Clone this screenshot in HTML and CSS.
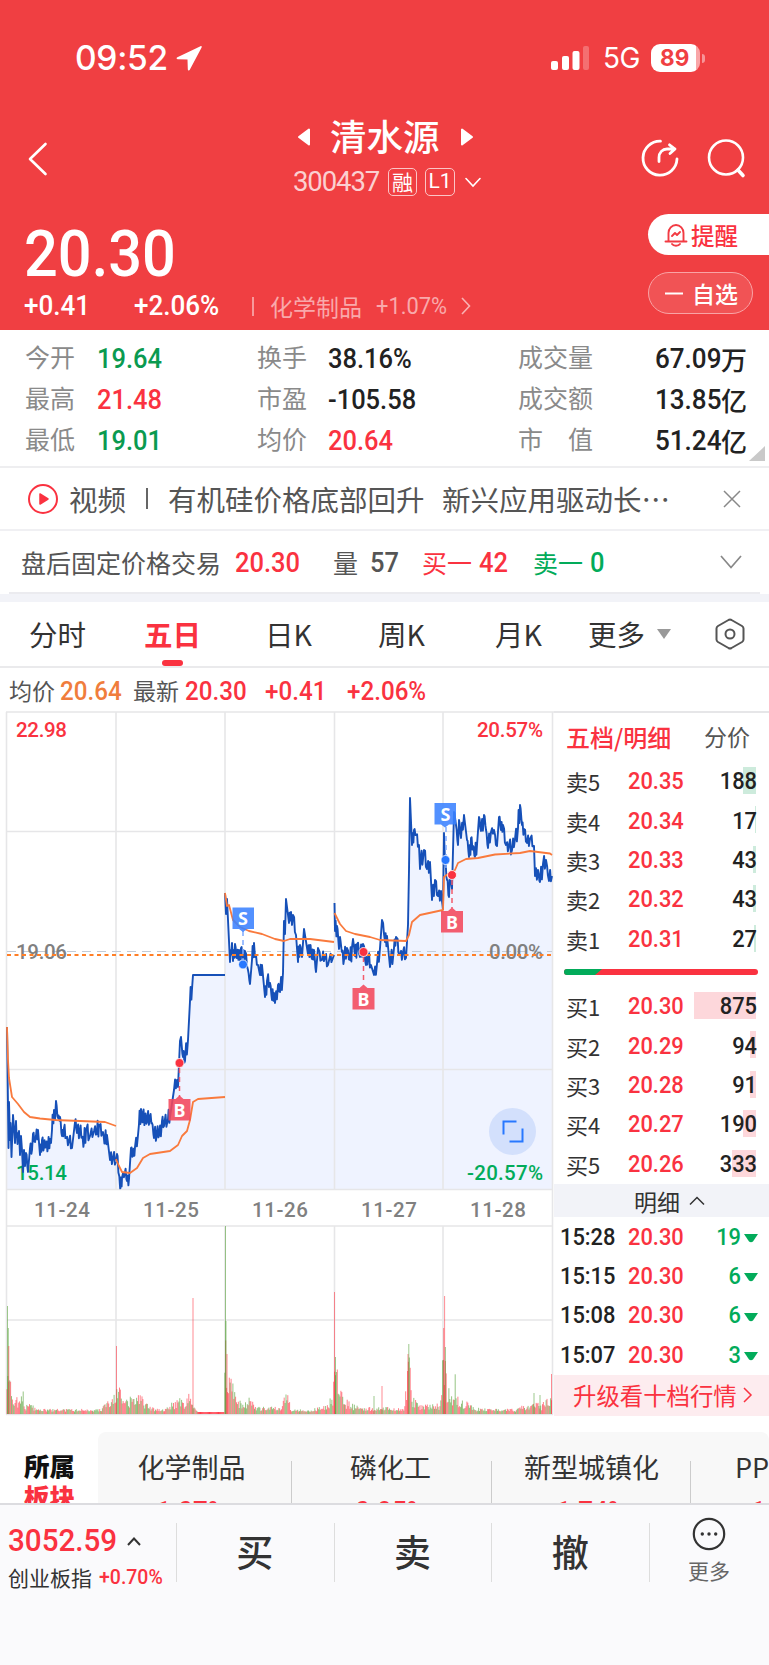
FILE: index.html
```html
<!DOCTYPE html>
<html lang="zh-CN">
<head>
<meta charset="utf-8">
<title>清水源 300437</title>
<link rel="stylesheet" href="styles.css">
</head>
<body>
<header class="hero">
  <div class="status">
    <span class="clock">09:52</span>
    <svg class="loc" width="27" height="27" viewBox="0 0 27 27"><path d="M24.5 1.2 1.4 12.2c-1.3.7-1 2 .5 2.1l9.6.3.3 9.7c.1 1.4 1.4 1.7 2 .5L25.6 2.4c.4-.9-.2-1.6-1.1-1.2z" fill="#fff"/></svg>
    <svg class="signal" width="40" height="25" viewBox="0 0 40 25" fill="#fff"><rect x="0" y="15" width="7" height="9" rx="2"/><rect x="11" y="10" width="7" height="14" rx="2"/><rect x="21.500" y="5" width="7" height="19" rx="2"/><rect x="32" y="0" width="6" height="24" rx="2" opacity=".25"/></svg>
    <span class="net">5G</span>
    <span class="battery"><b>89</b></span><i class="nub"></i>
  </div>
  <div class="titlebar">
    <svg class="back" width="20" height="34" viewBox="0 0 20 34" fill="none" stroke="#fff" stroke-width="2.600" stroke-linecap="round" stroke-linejoin="round"><path d="M17.500 2 2 17l15.500 15"/></svg>
    <div class="title">
      <div class="name"><svg width="14" height="18" viewBox="0 0 14 18"><path d="M12 1.500v15L2 9z" fill="#fff" stroke="#fff" stroke-width="2" stroke-linejoin="round"/></svg><span>清水源</span><svg width="14" height="18" viewBox="0 0 14 18"><path d="M2 1.500v15L12 9z" fill="#fff" stroke="#fff" stroke-width="2" stroke-linejoin="round"/></svg></div>
      <div class="code"><span class="codenum">300437</span><span class="tag">融</span><span class="tag l1">L1</span><svg width="16" height="11" viewBox="0 0 16 11" fill="none" stroke="#fff" stroke-width="1.600" stroke-linecap="round"><path d="m1 1.500 7 7.500 7-7.500"/></svg></div>
    </div>
    <svg class="share" width="40" height="40" viewBox="0 0 40 40" fill="none" stroke="#fff" stroke-width="2.800" stroke-linecap="round" stroke-linejoin="round"><path d="M20.500 2.200A17 17 0 1 0 37 20"/><path d="M19 22.500v-4c0-5 3.500-8.500 8-8.500h8M29.500 5.800l5.500 4.200-5 4.500"/></svg>
    <svg class="search" width="40" height="40" viewBox="0 0 40 40" fill="none" stroke="#fff" stroke-width="2.600" stroke-linecap="round"><circle cx="19" cy="18.500" r="17"/><path d="m31 31 5 5.500" stroke-width="3.600"/></svg>
  </div>
  <div class="quote">
    <div class="quote-main">
      <div class="price"><span class="n">20.30</span></div>
      <div class="change"><span class="n">+0.41</span><span class="n">+2.06%</span><i></i><span class="dim">化学制品</span><span class="n dim d2">+1.07%</span><svg width="12" height="18" viewBox="0 0 12 18" fill="none" stroke="#fff" stroke-opacity=".6" stroke-width="1.600"><path d="m2 1 7.500 8L2 17"/></svg></div>
    </div>
    <div class="actions">
      <div class="remind"><svg width="24" height="24" viewBox="0 0 24 24" fill="none" stroke="#f23b43" stroke-width="1.900" stroke-linejoin="round" stroke-linecap="round"><path d="M4.500 18V10a7.500 8 0 0 1 15 0v8M1.500 18.500h21M8 21c1.500 2.300 6.500 2.300 8 0M8 13l3-3 2 2 3-3"/></svg><span>提醒</span></div>
      <div class="fav"><svg width="18" height="3"><path d="M0 1.500h18" stroke="#fff" stroke-width="2"/></svg><span>自选</span></div>
    </div>
  </div>
</header>

<section class="stats">
  <span>今开</span><b class="n g">19.64</b><span>换手</span><b class="n">38.16%</b><span>成交量</span><b class="r-al"><em class="n">67.09</em>万</b>
  <span>最高</span><b class="n r">21.48</b><span>市盈</span><b class="n">-105.58</b><span>成交额</span><b class="r-al"><em class="n">13.85</em>亿</b>
  <span>最低</span><b class="n g">19.01</b><span>均价</span><b class="n r">20.64</b><span class="wide">市<i></i>值</span><b class="r-al"><em class="n">51.24</em>亿</b>
  <svg class="corner" width="16" height="16"><path d="M16 0v15H0z" fill="#c9c9c9"/></svg>
</section>

<section class="video">
  <svg width="32" height="32" viewBox="0 0 32 32"><circle cx="16" cy="16" r="14" fill="none" stroke="#fa3240" stroke-width="2"/><path d="M13 11v10l8-5z" fill="#fa3240" stroke="#fa3240" stroke-width="1.500" stroke-linejoin="round"/></svg>
  <span>视频</span><i></i><span>有机硅价格底部回升</span><span>新兴应用驱动长…</span>
  <svg class="close" width="18" height="18" viewBox="0 0 18 18" stroke="#888" stroke-width="1.500"><path d="m1 1 16 16M17 1 1 17"/></svg>
</section>

<section class="after">
  <span>盘后固定价格交易</span><b class="n r">20.30</b><span>量</span><b class="n">57</b><span class="r">买一</span><b class="n r">42</b><span class="g2">卖一</span><b class="n g2">0</b>
  <svg width="22" height="14" viewBox="0 0 22 14" fill="none" stroke="#888" stroke-width="1.700"><path d="m1 1 10 11.500L21 1"/></svg>
</section>
<div class="band"></div>

<nav class="tabs">
  <span>分时</span><span class="on">五日</span><span>日K</span><span>周K</span><span>月K</span><span>更多</span>
  <svg width="14" height="10"><path d="M0 0h14L7 10z" fill="#999"/></svg>
  <svg width="30" height="32" viewBox="0 0 30 32" fill="none" stroke="#555" stroke-width="2" stroke-linejoin="round"><path d="M13.500 2q1.500-.8 3 0l10.500 6q1.500 1 1.500 2.500v11q0 1.500-1.500 2.500l-10.500 6q-1.500.8-3 0L3 24q-1.500-1-1.500-2.500v-11Q1.500 9 3 8z"/><circle cx="15" cy="16" r="4.500"/></svg>
</nav>

<div class="info"><span>均价</span><b class="n o">20.64</b><span>最新</span><b class="n r">20.30</b><b class="n r">+0.41</b><b class="n r">+2.06%</b></div>

<main class="market">
  <svg class="chart" width="554" height="705" viewBox="0 711 554 705">
    <path id="fill" fill="#eff3ff"/>
    <g stroke="#e6e6e8" stroke-width="1.600" fill="none">
      <path d="M6 712H554M6 831.500H553M6 1069.500H553M6 1189.500H553M6 1226H553M6 1320H553M6 1414.500H553"/>
      <path d="M6.500 712V1414.500M116 712V1189.500M225 712V1189.500M334.500 712V1189.500M443 712V1189.500M552.500 712V1414.500M116 1226V1414M225 1226V1414M334.500 1226V1414M443 1226V1414"/>
    </g>
    <path d="M7 951.500H552" stroke="#c3cbd6" stroke-width="1.200" stroke-dasharray="9 6"/>
    <g class="axis">
      <text x="16" y="737" class="r" textLength="51">22.98</text>
      <text x="16" y="959" textLength="51">19.06</text>
      <text x="16" y="1180" class="g2" textLength="51">15.14</text>
      <text x="477" y="737" class="r" textLength="66">20.57%</text>
      <text x="489" y="959" textLength="54">0.00%</text>
      <text x="467" y="1180" class="g2" textLength="76">-20.57%</text>
      <text x="34" y="1217" textLength="56">11-24</text><text x="143" y="1217" textLength="56">11-25</text><text x="252" y="1217" textLength="56">11-26</text><text x="361" y="1217" textLength="56">11-27</text><text x="470" y="1217" textLength="56">11-28</text>
    </g>
    <path id="line" fill="none" stroke="#1650b8" stroke-width="1.900" stroke-linejoin="round"/>
    <path d="M7 955H552" stroke="#ff7f27" stroke-width="1.800" stroke-dasharray="4 3.500"/>
    <g fill="none" stroke="#f97a3d" stroke-width="1.800" stroke-linejoin="round">
      <path d="M7 1027 8 1060 9 1078 12 1097 18 1104 24 1112 30 1117 40 1118.500 55 1120 80 1121 105 1122 116 1126"/>
      <path d="M116 1159 119 1166 122 1172 130 1173 137 1168 143 1158 150 1154 170 1151 178 1145 182 1136 187 1131 190 1120 193 1102 198 1099 225 1097"/>
      <path d="M225 893 227 906 229 905 233 920 240 927 249 931 262 934 275 939 284 941 290 939 310 939 334 942"/>
      <path d="M334.500 913 340 924 346 931 355 934 370 937 380 940 406 941 409 935 412 922 420 915 443 910 444 877 448 874 455 870 458 863 466 859 478 858 495 854.500 520 853 530 851 550 853.500 552 855"/>
    </g>
    <g stroke-width="1.500" stroke-dasharray="5 4"><path d="M243 931V960M446 827V868" stroke="#7eaaff"/><path d="M179.500 1068V1097M363.500 957V984M452 880V908" stroke="#f25c6c"/></g>
    <g stroke="#fff" stroke-width=".8"><g fill="#2878ff"><circle cx="243" cy="964.500" r="4.500"/><circle cx="445.500" cy="860" r="4.500"/></g><g fill="#fa3240"><circle cx="179.500" cy="1063" r="4.500"/><circle cx="363.500" cy="952" r="4.500"/><circle cx="452" cy="875" r="4.500"/></g></g>
    <g fill="#3b82ff" fill-opacity=".88"><path d="M232.500 907.500h21.500v21.500h-7l-4 3-4-3h-6.500z"/><path d="M434.500 803h21.500v21.500h-7l-4 3-4-3h-6.500z"/></g>
    <g fill="#f4485c" fill-opacity=".88"><path d="M168.500 1099h7l4-3.500 4 3.500h7v21.500h-22z"/><path d="M352.500 988h7l4-3.500 4 3.500h7v21.500h-22z"/><path d="M441 911h7l4-3.500 4 3.500h7v21.500h-22z"/></g>
    <g class="mark"><text x="243" y="925">S</text><text x="445.500" y="820.500">S</text><text x="179.500" y="1117">B</text><text x="363.500" y="1006">B</text><text x="452" y="929">B</text></g>
    <circle cx="512.500" cy="1131.500" r="23.500" fill="#d3e0fc"/>
    <path d="M503.500 1134.500v-13h13M522.500 1128.500v13h-13" fill="none" stroke="#2878ff" stroke-width="2"/>
    <g id="volume" stroke-width="1"></g>
  </svg>
  <aside class="book">
    <div class="bhead"><b>五档/明细</b><span>分价</span></div>
    <div class="row sell"><span>卖5</span><b class="n">20.35</b><i style="width:13px"></i><em class="n">188</em></div>
    <div class="row sell"><span>卖4</span><b class="n">20.34</b><i style="width:1px"></i><em class="n">17</em></div>
    <div class="row sell"><span>卖3</span><b class="n">20.33</b><i style="width:3px"></i><em class="n">43</em></div>
    <div class="row sell"><span>卖2</span><b class="n">20.32</b><i style="width:3px"></i><em class="n">43</em></div>
    <div class="row sell"><span>卖1</span><b class="n">20.31</b><i style="width:2px"></i><em class="n">27</em></div>
    <div class="ratio"><svg width="194" height="6"><rect width="194" height="6" rx="3" fill="#fa3240"/><path d="M3 0H38L31 6H3A3 3 0 0 1 3 0" fill="#02ab5a"/></svg></div>
    <div class="row buy"><span>买1</span><b class="n">20.30</b><i style="width:62px"></i><em class="n">875</em></div>
    <div class="row buy"><span>买2</span><b class="n">20.29</b><i style="width:6px"></i><em class="n">94</em></div>
    <div class="row buy"><span>买3</span><b class="n">20.28</b><i style="width:6px"></i><em class="n">91</em></div>
    <div class="row buy"><span>买4</span><b class="n">20.27</b><i style="width:13px"></i><em class="n">190</em></div>
    <div class="row buy"><span>买5</span><b class="n">20.26</b><i style="width:24px"></i><em class="n">333</em></div>
    <div class="dhead"><span>明细</span><svg width="16" height="10" viewBox="0 0 16 10" fill="none" stroke="#333" stroke-width="1.500"><path d="m1 8.500 7-7 7 7"/></svg></div>
    <div class="deal"><span class="n">15:28</span><b class="n">20.30</b><em class="n">19</em><svg width="14" height="9"><path d="M0 0h14L9 7.500q-2 1.500-4 0z" fill="#02ab5a"/></svg></div>
    <div class="deal"><span class="n">15:15</span><b class="n">20.30</b><em class="n">6</em><svg width="14" height="9"><path d="M0 0h14L9 7.500q-2 1.500-4 0z" fill="#02ab5a"/></svg></div>
    <div class="deal"><span class="n">15:08</span><b class="n">20.30</b><em class="n">6</em><svg width="14" height="9"><path d="M0 0h14L9 7.500q-2 1.500-4 0z" fill="#02ab5a"/></svg></div>
    <div class="deal"><span class="n">15:07</span><b class="n">20.30</b><em class="n">3</em><svg width="14" height="9"><path d="M0 0h14L9 7.500q-2 1.500-4 0z" fill="#02ab5a"/></svg></div>
    <div class="upgrade"><span>升级看十档行情</span><svg width="10" height="16" viewBox="0 0 10 16" fill="none" stroke="#fa3240" stroke-width="1.500"><path d="m1 1 7 7-7 7"/></svg></div>
  </aside>
</main>

<section class="sectors">
  <div class="belong"><b>所属</b><b class="r">板块</b></div>
  <div class="cards">
    <div><span>化学制品</span><b>1.07%</b></div>
    <div><span>磷化工</span><b>0.95%</b></div>
    <div><span>新型城镇化</span><b>1.74%</b></div>
    <div class="last"><span>PPP</span><b>1.05%</b></div>
  </div>
</section>

<footer class="bar">
  <div class="index"><div class="i1"><span class="n r">3052.59</span><svg width="14" height="9" viewBox="0 0 14 9" fill="none" stroke="#333" stroke-width="2"><path d="m1 8 6-6.500L13 8"/></svg></div><div class="i2"><span>创业板指</span><span class="n r">+0.70%</span></div></div>
  <div class="act">买</div><div class="act">卖</div><div class="act">撤</div>
  <div class="more"><svg width="34" height="34" viewBox="0 0 34 34"><circle cx="17" cy="17" r="15.200" fill="none" stroke="#333" stroke-width="2.200"/><g fill="#333"><circle cx="10.300" cy="17" r="1.700"/><circle cx="17" cy="17" r="1.700"/><circle cx="23.700" cy="17" r="1.700"/></g></svg><span>更多</span></div>
</footer>
<script src="chart.js"></script>
</body>
</html>
```
FILE: styles.css
```css
* { box-sizing: border-box; }
body { margin: 0; width: 769px; height: 1665px; overflow: hidden; background: #fff; color: #333; font-family: "Noto Sans CJK SC", sans-serif; }
svg { display: block; flex: none; }
span, b, em { white-space: nowrap; }
b, em, i { font-style: normal; }
.n { font-family: Roboto, "Noto Sans CJK SC", sans-serif; font-weight: 500; display: inline-block; transform: scaleX(.93); transform-origin: left; }
.r { color: #fa3240; }
.g { color: #0a9a50; }
.g2 { color: #02ab5a; fill: #02ab5a; }
.o { color: #f07d3c; }

.hero { height: 330px; background: #f03f42; color: #fff; }
.status { height: 116px; display: flex; align-items: center; padding-left: 75px; }
.clock { width: 101px; font: 500 33.500px/40px Inter, sans-serif; letter-spacing: -.3px; }
.loc { margin-right: 348px; }
.net { width: 48px; margin-left: 12px; font: 400 28px/34px Inter, sans-serif; letter-spacing: -.5px; }
.battery { width: 49px; height: 28px; border-radius: 9px; background: linear-gradient(90deg, #fff 45px, #f9a6a8 45px); color: #f03f42; display: flex; align-items: center; padding-left: 9px; }
.battery b { font: 700 22.500px/28px Inter, sans-serif; }
.nub { width: 3px; height: 9px; border-radius: 0 3px 3px 0; margin-left: 2px; background: #f79598; }
.titlebar { height: 90px; display: flex; }
.back { margin: 26px 0 0 28px; }
.title { width: 280px; margin-left: 221px; }
.name { display: flex; align-items: center; height: 40px; font-size: 36.500px; line-height: 40px; margin-left: 28px; }
.name span { width: 110px; margin: 0 20px 0 19px; font-weight: 500; }
.name svg { margin-top: 1px; }
.code { display: flex; align-items: center; height: 32px; margin: 10px 0 0 24px; }
.codenum { width: 95px; font: 400 27.500px/32px Roboto, sans-serif; letter-spacing: -1.100px; color: #fbd0d1; }
.tag { width: 29px; height: 28px; border: 1.500px solid #fbc5c6; border-radius: 5px; font-size: 21px; line-height: 25px; text-align: center; margin-right: 8px; color: #fff; }
.l1 { width: 30px; font-family: Roboto, sans-serif; margin-right: 10px; }
.share { margin: 23px 0 0 91px; }
.search { margin: 23px 0 0 27px; }
.quote { height: 124px; display: flex; }
.quote-main { width: 648px; }
.price { height: 82px; padding: 1px 0 0 24px; font-size: 64px; line-height: 82px; }
.change { height: 36px; display: grid; grid-template-columns: 110px 118px 18px 106px 84px 12px; align-items: center; padding-left: 24px; font-size: 28px; line-height: 36px; }
.change i { width: 1.500px; height: 19px; background: #f7999b; }
.change .dim { font-size: 23px; color: #f9a9ab; }
.change .d2 { font-size: 23.500px; font-weight: 400; }
.actions { width: 121px; }
.remind { height: 41px; margin-top: 8px; background: #fff; border-radius: 21px 0 0 21px; display: flex; align-items: center; padding-left: 16px; gap: 3px; color: #fa3240; font-size: 23.500px; font-weight: 500; }
.fav { width: 105px; height: 42px; margin-top: 17px; border: 1.500px solid #f9a3a5; border-radius: 21px; background: #f15355; display: flex; align-items: center; padding-left: 16px; gap: 9px; font-size: 23px; font-weight: 500; }
.remind span, .fav span { line-height: 34px; }

.stats { height: 138px; border-bottom: 2px solid #eeeef0; padding: 7px 0 0 25px; display: grid; grid-template-columns: 72px 160px 71px 190px 110px 119px; grid-template-rows: repeat(3, 41px); line-height: 41px; font-size: 25px; color: #8a8a8a; position: relative; }
.stats span { line-height: 39px; }
.stats b { color: #222; font-size: 28px; font-weight: 500; line-height: 43px; }
.stats b.n { transform: scaleX(.91); }
.stats b.r { color: #fa3240; }
.stats b.g { color: #0a9a50; }
.stats .r-al { display: flex; justify-content: flex-end; font-size: 26px; }
.stats .r-al em { font-size: 28px; transform-origin: right; line-height: 43px; }
.wide i { display: inline-block; width: 25px; }
.corner { position: absolute; right: 4px; bottom: 4px; }

.video { height: 63px; border-bottom: 2px solid #f0f0f3; padding-left: 27px; display: flex; align-items: center; font-size: 28.500px; line-height: 62px; color: #555; }
.video i { width: 2px; height: 21px; background: #666; margin: 0 20px 0 20px; }
.video svg { margin-right: 10px; }
.video span:nth-of-type(2) { width: 274px; }
.video span:last-of-type { width: 281px; }
.video .close { margin-right: 0; }
.after { height: 63px; margin: 0 9px; border-bottom: 2px solid #ebebef; display: grid; grid-template-columns: 214px 98px 37px 52px 57px 54px 57px 130px 22px; align-items: center; padding-left: 12px; font-size: 25px; line-height: 60px; color: #555; }
.after b { font-size: 28px; padding-top: 2px; }
.after b.n { transform: scaleX(.91); }
.after .g2 { color: #02ab5a; }
.after .r { color: #fa3240; }
.band { height: 8px; background: #f2f3f8; }
.tabs { height: 66px; border-bottom: 2px solid #eaeaec; display: grid; grid-template-columns: 115px 121px 113px 117px 93px 69px 58px 30px; align-items: center; padding-left: 29px; font-size: 28.500px; line-height: 64px; color: #333; }
.tabs .on { color: #fa3240; font-weight: 700; position: relative; }
.tabs .on::after { content: ""; position: absolute; left: 18px; bottom: 0; width: 21px; height: 6px; border-radius: 3px; background: #fa3240; }
.info { height: 43px; display: grid; grid-template-columns: 51px 73px 52px 80px 82px 90px; align-items: center; padding-left: 9px; font-size: 23px; line-height: 43px; color: #555; }
.info b { font-size: 26px; padding-top: 2px; }
.market { height: 705px; display: flex; }
.chart { width: 554px; }
.axis { font: 500 20.500px Roboto, sans-serif; fill: #808080; }
.axis .r { fill: #fa3240; }
.axis .g2 { fill: #02ab5a; }
.mark { font: 700 18px "Noto Sans", sans-serif; fill: #fff; text-anchor: middle; }

.book { width: 215px; border-top: 2px solid #e6e6e8; font-size: 23.500px; }
.bhead { height: 49px; padding-left: 12px; display: flex; line-height: 47px; color: #555; font-size: 23px; }
.bhead b { width: 138px; font-size: 24px; font-weight: 500; color: #fa3240; }
.row { height: 39.400px; display: grid; grid-template-columns: 62px 65px 1fr; align-items: center; padding: 0 12px; line-height: 39px; color: #333; position: relative; }
.row span { font-size: 22px; }
.row b, .deal b { color: #fa3240; }
.row em { color: #222; text-align: right; transform-origin: right; }
.row i { position: absolute; right: 13px; top: 5px; height: 27px; }
.sell i { background: #cdebdc; }
.buy i { background: #fdd7db; }
.ratio { height: 28px; padding: 10px 0 0 10px; }
.dhead { height: 33px; margin-top: .500px; background: #f2f3f8; display: flex; align-items: center; padding-left: 80px; gap: 9px; line-height: 32px; font-size: 23px; }
.deal { height: 39.400px; display: grid; grid-template-columns: 68px 65px 48px 1fr; align-items: center; padding-left: 6px; line-height: 39px; color: #222; }
.deal em { color: #02ab5a; text-align: right; transform-origin: right; }
.deal svg { margin: 3px 0 0 3px; }
.upgrade { height: 41px; background: #fdecef; color: #fa3240; display: flex; align-items: center; padding-left: 19px; gap: 6px; font-size: 23.400px; line-height: 40px; }

.sectors { height: 87px; padding-top: 16px; overflow: hidden; display: flex; }
.belong { width: 98px; padding: 18px 0 0 24px; display: flex; flex-direction: column; font-size: 25.500px; line-height: 30px; color: #111; }
.belong b { font-weight: 900; }
.belong .r { color: #fa3240; line-height: 32px; }
.cards { width: 671px; height: 90px; border-radius: 8px 8px 0 0; background: #f8f8f8; display: grid; grid-template-columns: 194px 200px 199px 78px; padding-top: 15px; }
.cards div { display: flex; flex-direction: column; align-items: center; font-size: 27px; line-height: 40px; background: linear-gradient(#ccc, #ccc) right 14px / 1.500px 80px no-repeat; }
.cards div:first-child { padding-right: 7px; }
.cards div:nth-child(2) { padding-right: 3px; }
.cards b { font: 500 26px/40px Roboto, sans-serif; color: #fa3240; margin-top: 4px; }
.cards .last { align-items: flex-start; padding-left: 44px; background: none; overflow: hidden; }
.cards .last b { margin-left: 16px; }

.bar { height: 162px; border-top: 2px solid #dcdce0; background: #fafafc; display: flex; padding-top: 18px; }
.index { width: 177px; height: 59px; border-right: 1.500px solid #ddd; padding-left: 8px; }
.i1 { height: 36px; display: grid; grid-template-columns: 119px 14px; align-items: center; font-size: 31px; line-height: 36px; }
.i1 .n { transform: scaleX(.955); }
.i2 { height: 36px; display: grid; grid-template-columns: 91px 70px; font-size: 21px; line-height: 34px; align-items: center; }
.i2 .n { transform: scaleX(.95); font-size: 20.500px; }
.act { width: 157.700px; height: 59px; border-right: 1.500px solid #ddd; text-align: center; font-size: 37px; line-height: 56px; font-weight: 500; padding-right: 1px; }
.more { width: 118px; display: flex; flex-direction: column; align-items: center; margin-top: -6px; font-size: 21px; line-height: 36px; color: #666; }
.more span { margin-top: 1px; }
```
FILE: chart.js
```js
// Five-day price trace, one polyline per trading day.
const days = [
  "7 1027 7.500 1066 8.500 1148 9 1102 10 1140 10.500 1123 11.500 1157 13 1115 14 1128 15 1143 16 1121 17.500 1144 19 1131 20 1155 21 1136 22 1150 23 1172 24 1150 25 1166 26 1153 28 1172 30 1148 32 1150 33 1134 35 1142 36 1136 38 1130 40 1155 42 1140 44 1147 46 1143 48 1147 50 1139 51 1143 52 1130 54 1110 55 1119 56 1101 58 1118 60 1117 62 1136 64 1128 66 1138 69 1141 72 1148 75 1122 77 1133 80 1130 82 1138 84 1142 86 1131 90 1136 94 1131 97 1134 99 1125 103 1132 105 1143 107 1135 110 1160 113 1158 116 1162",
  "116 1160 117 1154 119 1175 120.500 1188 122 1178 125 1172 127 1181 129 1179 131 1148 133 1156 135 1147 138 1135 139 1124 141 1109 143 1120 145 1117 147 1122 150 1116 152 1123 154 1138 157 1133 159 1136 162 1121 164 1126 168 1119 170 1117 174 1090 177 1080 178 1087 179 1064 180 1041 181 1037 183 1057 185 1061 188 1040 190 1001 192 989 193 975 225 975",
  "225 893 226 914 227 899 230 962 232 943 233 961 235 944 237 958 239 950 240 960 241 948 243 964 245 951 248 970 250 984 252 960 254 943 255 957 258 965 260 975 262 965 265 997 267 981 270 983 272 1000 274 993 275 1003 278 985 280 992 283 973 284 921 285 934 286 899 289 923 291 912 292 925 293 915 296 935 298 962 300 945 302 957 304 929 308 954 310 945 312 959 314 950 316 972 318 948 322 960 325 958 328 965 334 955",
  "334.500 903 335 931 337 926 339 949 340 937 342 952 344 960 347 948 350 960 352 947 353 939 355 956 357 944 360 957 363 944 366 965 368 958 371 965 374 975 377 964 380 948 382 920 385 942 387 936 390 967 394 948 396 937 400 955 403 952 406 958 408 925 409 870 410 798 412 845 414 830 416 835 419 845 420 869 424 850 427 869 430 862 432 900 435 880 438 896 441 891 443 910",
  "443 908 444 833 445 861 447 880 449 897 450 875 452 889 453 851 454 812 456 825 458 845 459 820 461 838 464 815 467 840 469 857 471 838 473 846 475 857 477 845 479 817 481 831 484 815 486 830 488 848 491 832 494 830 497 846 499 817 501 830 503 825 506 845 509 845 512 850 515 839 518 828 520 805 522 825 524 829 527 843 530 839 534 846 535 876 538 870 540 882 543 864 546 860 549 881 552 876"
];
let seed = 11;
const rand = () => (seed = (seed * 16807) % 2147483647) / 2147483647;

let line = "", area = "M7 1189V1027";
for (const day of days) {
  const v = day.split(" ").map(Number);
  let px = v[0], py = v[1];
  line += `M${px} ${py}`;
  area += `L${px} ${py}`;
  for (let i = 2; i < v.length; i += 2) {
    const x = v[i], y = v[i + 1];
    if (Math.abs(y - py) < 24 && y !== 975 && x - px > 1.2) {
      const mx = (x + px) / 2, my = (y + py) / 2;
      const a = `L${mx - .4} ${(my - 2 - rand() * 7).toFixed(1)}L${mx + .4} ${(my + 2 + rand() * 6).toFixed(1)}`;
      line += a;
      area += a;
    }
    line += `L${x} ${y}`;
    area += `L${x} ${y}`;
    px = x; py = y;
  }
}
document.getElementById("line").setAttribute("d", line);
document.getElementById("fill").setAttribute("d", area + "V1189Z");

// Volume envelope as x, height pairs; bars are drawn underneath it.
const env = [7,60,9,50,10,35,12,30,15,17,20,14,23,22,26,8,32,9,36,4,101,4,106,12,113,14,116,26,120,26,123,12,131,16,140,20,150,6,165,4,176,14,181,20,185,7,189,30,191,11,194,8,197,2,224.5,2,225,90,228,60,230,42,236,20,244,8,250,18,256,6,282,6,285,22,288,22,291,5,310,3,325,8,333,20,334,60,336,48,340,28,345,15,355,8,370,6,386,6,404,4,408,60,410,50,412,18,420,8,440,10,443,70,445,60,447,30,452,16,455,40,458,15,466,12,475,5,517,4,520,14,525,4,533,12,542,8,550,24,552,40];
const red = "#ff2d3c", green = "#4f9d2f";
let bars = "";
const bar = (x, h, c, o) => { bars += `<path d="M${x} 1414V${(1414 - h).toFixed(1)}" stroke="${c}" stroke-opacity="${o}"/>`; };
let k = 0;
for (let x = 7; x < 552; x += .9) {
  while (env[k + 2] < x) k += 2;
  const t = (x - env[k]) / (env[k + 2] - env[k]);
  const h = env[k + 1] + (env[k + 3] - env[k + 1]) * t;
  const flat = x > 197 && x < 224;
  bar(x.toFixed(1), flat ? 2 : 1 + h * (.3 + rand() * .75), flat || rand() < .5 ? red : green, flat ? .9 : .6);
}
[[7.5,108,green],[8.3,86,green],[8.8,68,red],[116.5,68,red],[193,116,red],[225.5,188,green],[226,93,green],[227,60,red],[334.5,122,red],[335.5,57,green],[374,18,green],[382,28,red],[408,60,red],[408.8,70,green],[443.7,86,red],[444.6,118,red],[445.4,67,green],[534,21,green],[540,19,green],[551.5,40,red]].forEach(s => bar(s[0], s[1], s[2], .55));
document.getElementById("volume").innerHTML = bars;
```
